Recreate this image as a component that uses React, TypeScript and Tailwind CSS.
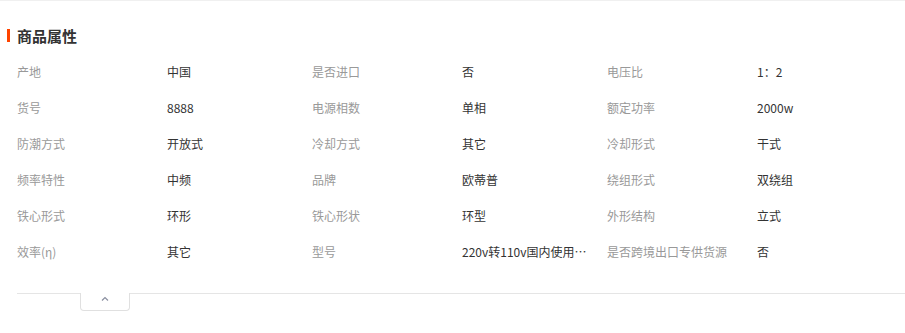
import React from "react";

type Attr = { label: string; value: string };

const rows: Attr[][] = [
  [
    { label: "产地", value: "中国" },
    { label: "是否进口", value: "否" },
    { label: "电压比", value: "1：2" },
  ],
  [
    { label: "货号", value: "8888" },
    { label: "电源相数", value: "单相" },
    { label: "额定功率", value: "2000w" },
  ],
  [
    { label: "防潮方式", value: "开放式" },
    { label: "冷却方式", value: "其它" },
    { label: "冷却形式", value: "干式" },
  ],
  [
    { label: "频率特性", value: "中频" },
    { label: "品牌", value: "欧蒂普" },
    { label: "绕组形式", value: "双绕组" },
  ],
  [
    { label: "铁心形式", value: "环形" },
    { label: "铁心形状", value: "环型" },
    { label: "外形结构", value: "立式" },
  ],
  [
    { label: "效率(η)", value: "其它" },
    { label: "型号", value: "220v转110v国内使用美国日本电器电源变压器" },
    { label: "是否跨境出口专供货源", value: "否" },
  ],
];

export default function App() {
  return (
    <div
      className="w-full h-[333px] bg-white border-t border-[#f0f0f0] overflow-hidden"
      style={{ fontFamily: '"Noto Sans CJK SC", "Noto Sans", sans-serif' }}
    >
      {/* 标题 */}
      <div className="flex items-center pl-[7px] pt-[25px] h-[44px]">
        <span className="w-[3px] h-[13px] bg-[#ff4400]" />
        <h3 className="ml-[7px] text-[15px] leading-[18px] font-bold text-[#333]">商品属性</h3>
      </div>

      {/* 属性表 */}
      <div className="mt-[9px] px-[17px]">
        {rows.map((row, i) => (
          <div key={i} className="flex h-[36px] items-center text-[12px] leading-[16px]">
            {row.map((a) => (
              <div key={a.label} className="flex">
                <span className="w-[150px] text-[#999] whitespace-nowrap">{a.label}</span>
                <span className="w-[145px] pr-[20px] text-[#333] truncate">{a.value}</span>
              </div>
            ))}
          </div>
        ))}
      </div>

      {/* 收起按钮 */}
      <div className="mt-[23px] ml-[17px] border-t border-[#e5e5e5]">
        <div className="-mt-px ml-[63px] w-[50px] h-[18px] bg-white border border-t-0 border-[#e0e0e0] rounded-b-[4px] flex justify-center pt-[3px]">
          <svg width="8" height="6" viewBox="0 0 8 6" fill="none">
            <path d="M1 4.5 L4 1.5 L7 4.5" stroke="#8a8fa0" strokeWidth="1.2" />
          </svg>
        </div>
      </div>
    </div>
  );
}
